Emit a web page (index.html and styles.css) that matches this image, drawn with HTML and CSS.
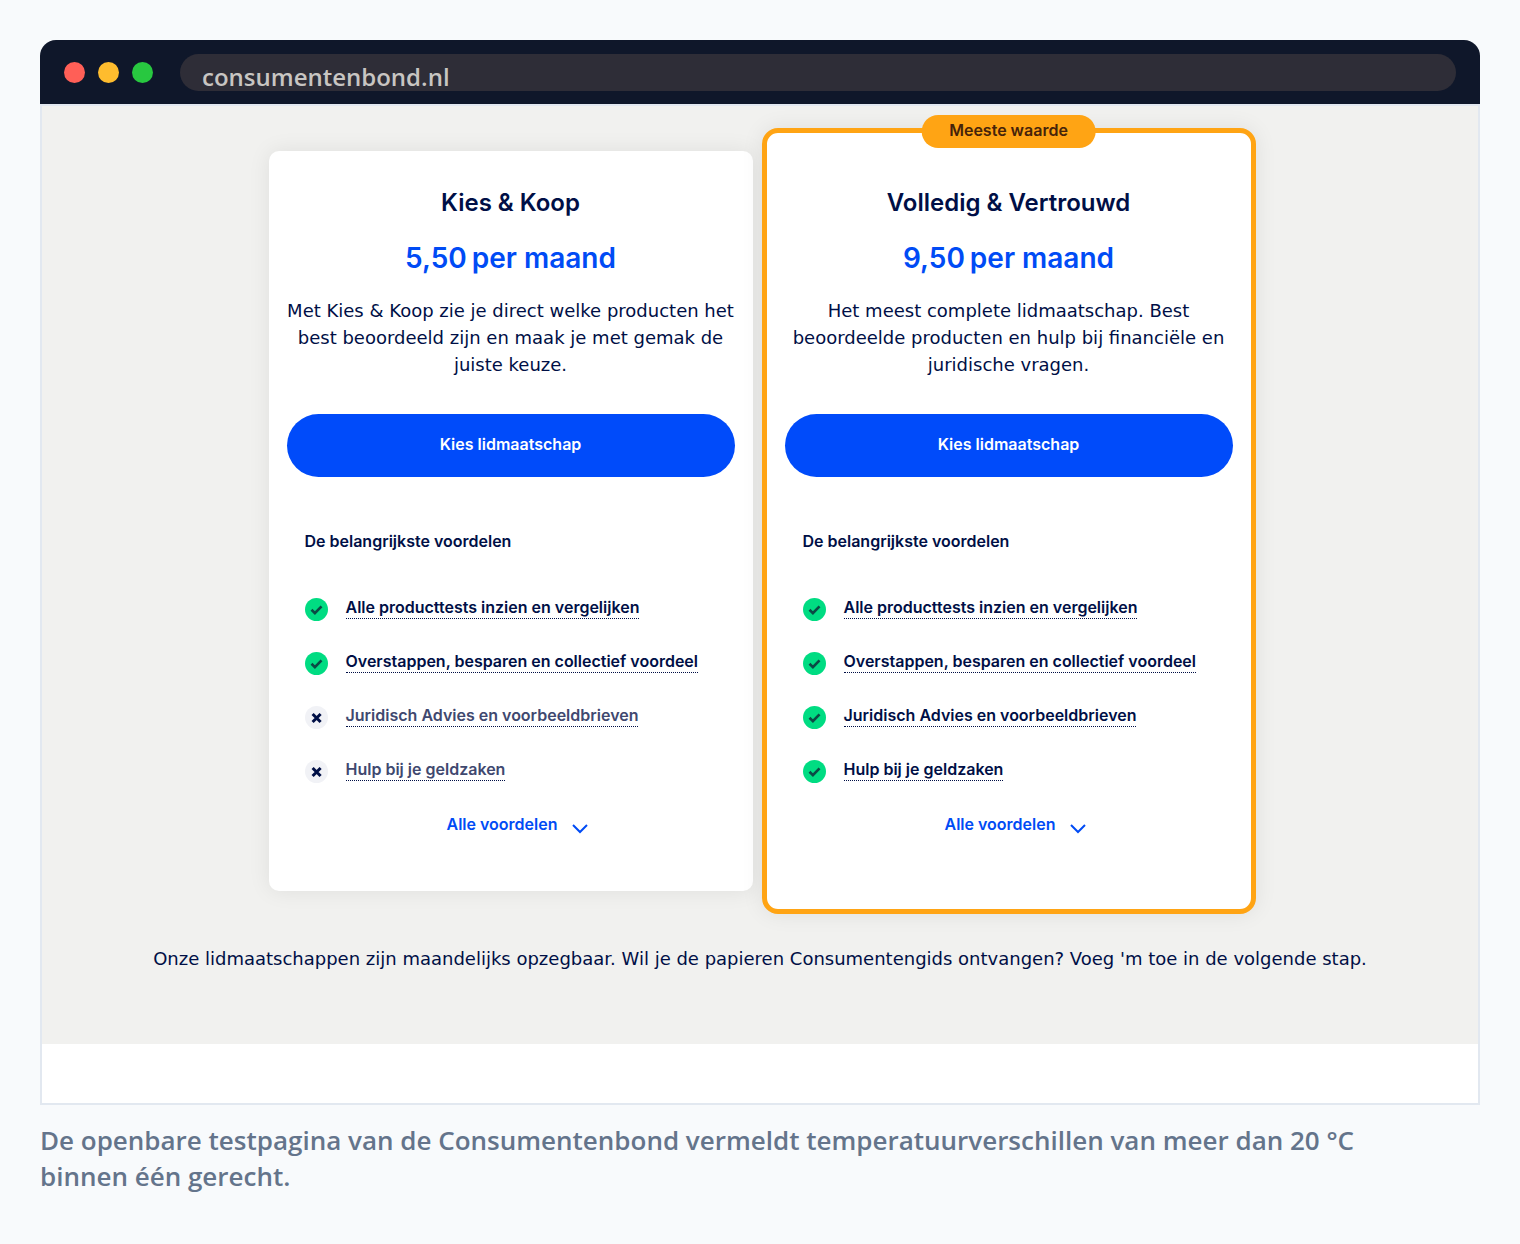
FILE: index.html
```html
<!DOCTYPE html>
<html lang="nl">
<head>
    <meta charset="UTF-8" />
    <meta name="viewport" content="width=device-width, initial-scale=1.0" />
    <title>Consumentenbond</title>
    <link rel="stylesheet" href="styles.css">
</head>
<body>
    <svg class="sprite" aria-hidden="true">
        <symbol id="check" viewBox="0 0 23 23">
            <circle cx="11.5" cy="11.5" r="11.5" fill="#00dc82" />
            <path d="M6.5 11.8l3.4 3.3 6.6-6.7" fill="none" stroke="#0b4a45" stroke-width="2.7" />
        </symbol>
        <symbol id="cross" viewBox="0 0 23 23">
            <circle cx="11.5" cy="11.5" r="11.5" fill="#f1f2f6" />
            <path d="M7.6 8l8 8M15.6 8l-8 8" fill="none" stroke="#000f46" stroke-width="3" />
        </symbol>
        <symbol id="chevron" viewBox="0 0 16 10">
            <path d="M1 1l7 7 7-7" fill="none" stroke="currentColor" stroke-width="2" />
        </symbol>
    </svg>
    <figure class="shot">
        <div class="browser">
            <header class="browser-bar">
                <div class="dots">
                    <span class="dot red"></span>
                    <span class="dot yellow"></span>
                    <span class="dot green"></span>
                </div>
                <div class="address">consumentenbond.nl</div>
            </header>
            <main class="page">
                <section class="memberships">
                    <div class="cards">
                        <article class="card">
                            <h2 class="name">Kies &amp; Koop</h2>
                            <p class="price"><span>5,50</span><span>per maand</span></p>
                            <p class="description">Met Kies &amp; Koop zie je direct welke producten het best beoordeeld zijn en maak je met gemak de juiste keuze.</p>
                            <button class="choose" type="button">Kies lidmaatschap</button>
                            <h3 class="benefits-title">De belangrijkste voordelen</h3>
                            <ul class="benefits">
                                <li><svg class="icon"><use href="#check" /></svg><a href="#">Alle producttests inzien en vergelijken</a></li>
                                <li><svg class="icon"><use href="#check" /></svg><a href="#">Overstappen, besparen en collectief voordeel</a></li>
                                <li class="missing"><svg class="icon"><use href="#cross" /></svg><a href="#">Juridisch Advies en voorbeeldbrieven</a></li>
                                <li class="missing"><svg class="icon"><use href="#cross" /></svg><a href="#">Hulp bij je geldzaken</a></li>
                            </ul>
                            <button class="more" type="button">Alle voordelen <svg class="chevron"><use href="#chevron" /></svg></button>
                        </article>
                        <article class="card featured">
                            <span class="badge">Meeste waarde</span>
                            <h2 class="name">Volledig &amp; Vertrouwd</h2>
                            <p class="price"><span>9,50</span><span>per maand</span></p>
                            <p class="description">Het meest complete lidmaatschap. Best beoordeelde producten en hulp bij financiële en juridische vragen.</p>
                            <button class="choose" type="button">Kies lidmaatschap</button>
                            <h3 class="benefits-title">De belangrijkste voordelen</h3>
                            <ul class="benefits">
                                <li><svg class="icon"><use href="#check" /></svg><a href="#">Alle producttests inzien en vergelijken</a></li>
                                <li><svg class="icon"><use href="#check" /></svg><a href="#">Overstappen, besparen en collectief voordeel</a></li>
                                <li><svg class="icon"><use href="#check" /></svg><a href="#">Juridisch Advies en voorbeeldbrieven</a></li>
                                <li><svg class="icon"><use href="#check" /></svg><a href="#">Hulp bij je geldzaken</a></li>
                            </ul>
                            <button class="more" type="button">Alle voordelen <svg class="chevron"><use href="#chevron" /></svg></button>
                        </article>
                    </div>
                    <p class="note">Onze lidmaatschappen zijn maandelijks opzegbaar. Wil je de papieren Consumentengids ontvangen? Voeg 'm toe in de volgende stap.</p>
                </section>
            </main>
        </div>
        <figcaption class="caption">De openbare testpagina van de Consumentenbond vermeldt temperatuurverschillen van meer dan 20 °C binnen één gerecht.</figcaption>
    </figure>
</body>
</html>
```
FILE: styles.css
```css
* {
    box-sizing: border-box;
}

body {
    margin: 0;
    padding: 40px;
    background-color: #f8fafc;
    color: #000f46;
    font-family: "DejaVu Sans", sans-serif;
    font-size: 18px;
    line-height: 27px;
}

h2, h3, p, ul, figure {
    margin: 0;
    padding: 0;
}

button {
    border: none;
    cursor: pointer;
}

.sprite {
    display: none;
}

/* Browser frame */
.browser-bar {
    display: flex;
    align-items: center;
    gap: 27px;
    height: 64px;
    padding: 0 24px;
    background-color: #0f172a;
    border-radius: 16px 16px 0 0;
}

.dots {
    display: flex;
    gap: 13px;
}

.dot {
    width: 21px;
    height: 21px;
    border-radius: 50%;
}

.red {
    background-color: #ff5f57;
}

.yellow {
    background-color: #febc2e;
}

.green {
    background-color: #28c840;
}

.address {
    flex: 1;
    height: 37px;
    padding: 5px 22px 0;
    border-radius: 19px;
    background-color: #2e2d37;
    color: #c8c5c2;
    font-family: "Open Sans", sans-serif;
    font-size: 24px;
    font-weight: 600;
    line-height: 36px;
}

.page {
    padding-bottom: 59px;
    border: 2px solid #e2e8f0;
    background-color: #ffffff;
}

/* Memberships */
.memberships {
    padding: 22px 18px 72px;
    background-color: #f1f1ef;
}

.cards {
    display: flex;
    justify-content: center;
    align-items: center;
    gap: 9px;
    padding-left: 4px;
}

.card {
    position: relative;
    display: flex;
    flex-direction: column;
    flex: 0 1 484px;
    padding: 36px 18px 53px;
    border-radius: 10px;
    background-color: #ffffff;
    box-shadow: 0 0 22px rgba(0, 0, 0, 0.08);
}

.featured {
    flex-basis: 494px;
    padding: 54px 18px 71px;
    border: 5px solid #ffa414;
    border-radius: 16px;
}

.name,
.price,
.badge,
.choose,
.benefits-title,
.benefits,
.more {
    font-family: Inter, sans-serif;
    font-weight: 600;
}

.badge {
    position: absolute;
    top: -18px;
    left: 50%;
    transform: translateX(-50%);
    padding: 0 28px 3px;
    border-radius: 17px;
    background-color: #ffa414;
    color: #46230a;
    font-size: 16px;
    line-height: 30px;
    white-space: nowrap;
}

.name {
    font-size: 24px;
    line-height: 32px;
    text-align: center;
}

.price {
    display: flex;
    justify-content: center;
    gap: 5px;
    margin-top: 19px;
    color: #004bf5;
    font-size: 28px;
    line-height: 40px;
}

.description {
    margin-top: 19px;
    text-align: center;
}

.choose {
    height: 63px;
    margin-top: 36px;
    padding: 0 18px 3px;
    border-radius: 32px;
    background-color: #004bfa;
    color: #ffffff;
    font-size: 16px;
}

.benefits-title {
    margin-top: 51px;
    padding-left: 18px;
    font-size: 16px;
}

.benefits {
    display: flex;
    flex-direction: column;
    gap: 27px;
    margin-top: 39px;
    padding-left: 18px;
    list-style: none;
    font-size: 16px;
}

.benefits li {
    display: flex;
    align-items: flex-end;
    gap: 18px;
    height: 27px;
}

.benefits a {
    margin-bottom: 2px;
    border-bottom: 1px dotted #000f46;
    color: #000f46;
    line-height: 21px;
    text-decoration: none;
}

.benefits .missing a {
    color: #40486f;
}

.icon {
    width: 23px;
    height: 23px;
}

.more {
    display: flex;
    align-items: center;
    justify-content: center;
    gap: 15px;
    margin-top: 28px;
    padding: 0 0 0 14px;
    background: none;
    color: #004bf5;
    font-size: 16px;
    line-height: 27px;
}

.chevron {
    width: 16px;
    height: 10px;
    margin-top: 8px;
}

.note {
    margin-top: 31px;
    text-align: center;
}

.caption {
    margin-top: 17px;
    padding-right: 40px;
    color: #64748b;
    font-family: "Open Sans", sans-serif;
    font-size: 26px;
    font-weight: 600;
    line-height: 36px;
}
```
